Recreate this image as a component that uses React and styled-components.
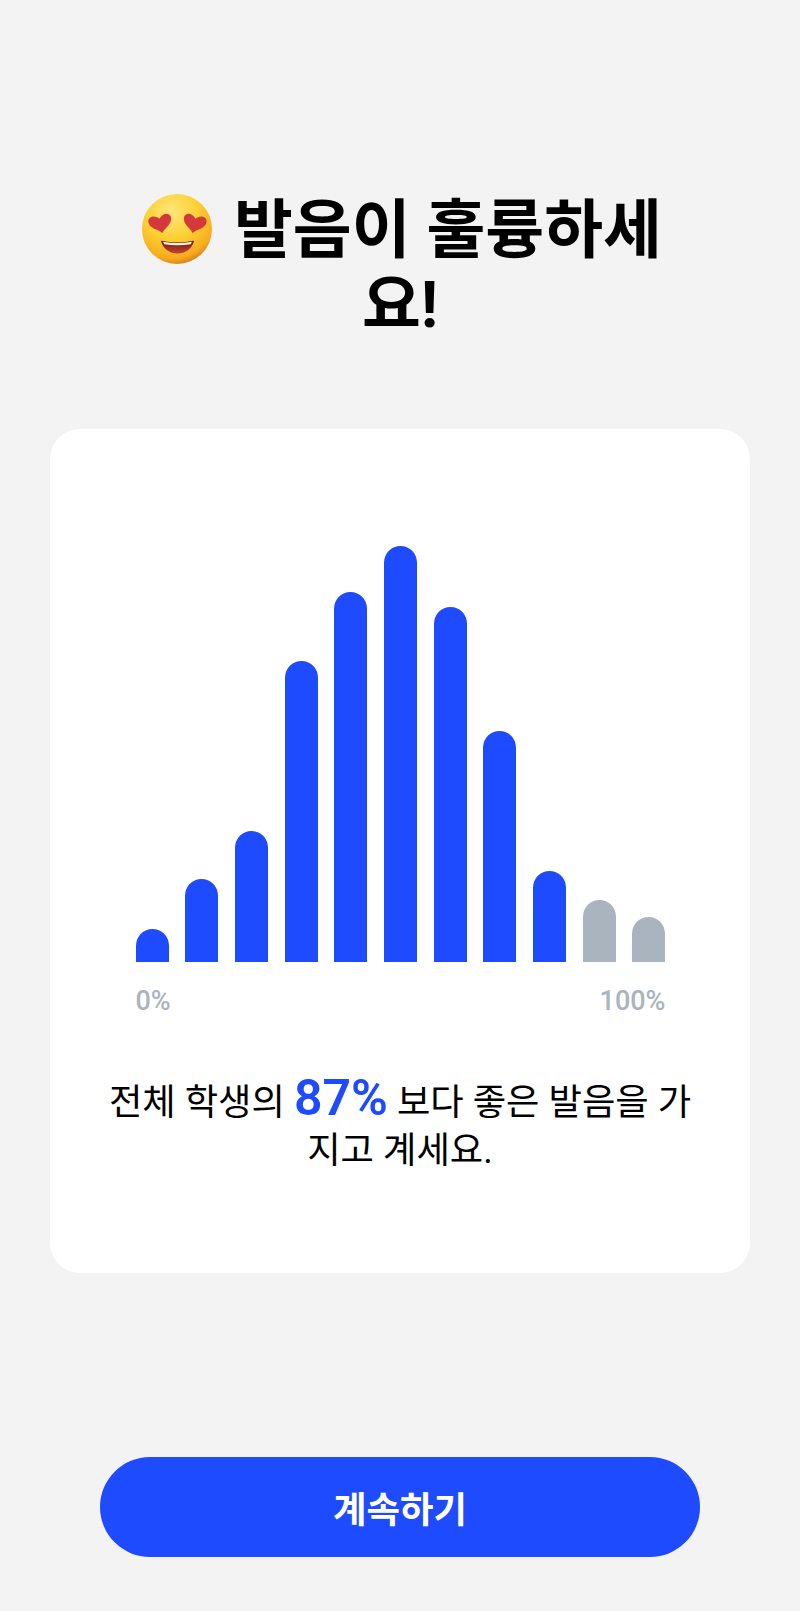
import styled, { createGlobalStyle } from "styled-components";

const GlobalStyle = createGlobalStyle`
  html, body {
    margin: 0;
    padding: 0;
    background: #f3f3f3;
  }
  * {
    box-sizing: border-box;
  }
`;

const Page = styled.div`
  width: 800px;
  height: 1611px;
  display: flex;
  flex-direction: column;
  align-items: center;
  font-family: Roboto, "Noto Sans CJK KR", sans-serif;
  background: #f3f3f3;
  color: #000;
`;

const Title = styled.h1`
  width: 560px;
  height: 150px;
  margin: 193px 0 86px;
  font-size: 64px;
  line-height: 75px;
  font-weight: 700;
  text-align: center;
  word-break: break-all;
`;

const Emoji = styled.svg`
  width: 78px;
  height: 78px;
  margin: -10px 2px -2px 0;
  vertical-align: -14px;
`;

const Card = styled.section`
  width: 700px;
  height: 844px;
  padding: 104px 50px 0;
  background: #fff;
  border-radius: 30px;
`;

const Chart = styled.div`
  height: 429px;
  padding: 0 34.5px 0 35.5px;
  display: flex;
  align-items: flex-end;
  justify-content: space-between;
`;

const Bar = styled.div`
  width: 33px;
  height: ${(props) => props.$height}px;
  background: ${(props) => (props.$active ? "#1f4bff" : "#a9b4be")};
  border-radius: 16.5px 16.5px 0 0;
`;

const Scale = styled.div`
  margin-top: 23px;
  padding: 0 34.5px 0 35.5px;
  display: flex;
  justify-content: space-between;
  font-size: 27px;
  line-height: 32px;
  font-weight: 500;
  color: #a9b4be;
`;

const Summary = styled.p`
  margin: 57px 0 0;
  font-size: 36.3px;
  line-height: 48px;
  text-align: center;
  word-break: break-all;
`;

const Percent = styled.strong`
  font-size: 50px;
  line-height: 48px;
  font-weight: 600;
  color: #1f4bff;
`;

const ContinueButton = styled.button`
  width: 600px;
  height: 100px;
  margin-top: 184px;
  border: 0;
  border-radius: 50px;
  background: #1f4bff;
  color: #fff;
  font-family: inherit;
  font-size: 36.4px;
  font-weight: 700;
`;

const bars = [33, 83, 131, 301, 370, 416, 355, 231, 91, 62, 45];

const heart = "M0 10C-4 5-12 3-12-4C-12-9-5-11 0-5C5-11 12-9 12-4C12 3 4 5 0 10z";

const HeartEyes = () => (
  <Emoji viewBox="0 0 78 78" aria-hidden="true">
    <defs>
      <radialGradient id="face" cx="42%" cy="26%" r="78%">
        <stop offset="0%" stopColor="#ffe67a" />
        <stop offset="50%" stopColor="#fdcf33" />
        <stop offset="85%" stopColor="#f8aa1d" />
        <stop offset="100%" stopColor="#c9761a" />
      </radialGradient>
      <linearGradient id="mouth" x1="0" y1="0" x2="0" y2="1">
        <stop offset="0%" stopColor="#6a1c12" />
        <stop offset="100%" stopColor="#c9412f" />
      </linearGradient>
    </defs>
    <circle cx="39" cy="39" r="35" fill="url(#face)" />
    <path d={heart} transform="translate(22.500 33.500) rotate(-12) scale(.96)" fill="#d5383b" />
    <path d={heart} transform="translate(56.500 33.500) rotate(12) scale(.96)" fill="#d5383b" />
    <path d="M24 50.700c10 2.200 21 2.200 31 0 .8 0 1 .5.8 1.300C53.500 59 47 63.500 39.500 63.500S25.500 59 23.200 52c-.2-.8 0-1.300.8-1.300z" fill="url(#mouth)" />
    <path d="M25 51.800c9.500 1.700 19.500 1.700 29 0-.3 1-.8 1.800-1.300 2.500-8.500 1.300-18 1.300-26.400 0-.5-.7-1-1.500-1.300-2.500z" fill="#fff4e0" />
  </Emoji>
);

export default function App() {
  return (
    <>
      <GlobalStyle />
      <Page>
        <Title>
          <HeartEyes /> 발음이 훌륭하세요!
        </Title>
        <Card>
          <Chart>
            {bars.map((height, index) => (
              <Bar key={index} $height={height} $active={index < 9} />
            ))}
          </Chart>
          <Scale>
            <span>0%</span>
            <span>100%</span>
          </Scale>
          <Summary>
            전체 학생의 <Percent>87%</Percent> 보다 좋은 발음을 가지고 계세요.
          </Summary>
        </Card>
        <ContinueButton>계속하기</ContinueButton>
      </Page>
    </>
  );
}
